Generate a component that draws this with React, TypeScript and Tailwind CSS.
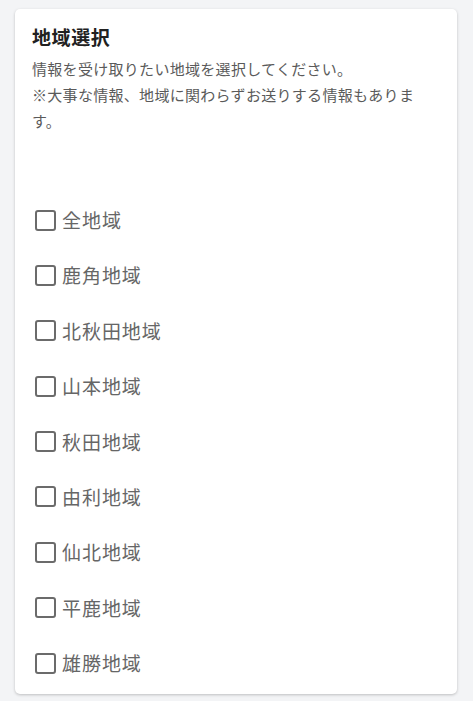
import React from "react";

const regions = [
  "全地域",
  "鹿角地域",
  "北秋田地域",
  "山本地域",
  "秋田地域",
  "由利地域",
  "仙北地域",
  "平鹿地域",
  "雄勝地域",
];

export default function App() {
  return (
    <div
      className="min-h-screen bg-[#f3f4f6] pl-[15px] pr-[16px] pt-[9px] pb-[7px]"
      style={{ fontFamily: '"Noto Sans CJK JP", "Noto Sans", sans-serif' }}
    >
      <div className="rounded-[5px] bg-white px-[17px] pt-[14px] pb-[17px] shadow-[0_1px_3px_rgba(0,0,0,0.22)]">
        <h1 className="text-[19px] font-bold leading-[28px] tracking-[0.03em] text-[#212121]">
          地域選択
        </h1>
        <p className="mt-[5px] text-[15px] leading-[26px] tracking-[0.02em] text-[#5a5a5a]">
          情報を受け取りたい地域を選択してください。
          <br />
          ※大事な情報、地域に関わらずお送りする情報もあります。
        </p>
        <div className="mt-[72px] flex flex-col gap-[27.375px]">
          {regions.map((r) => (
            <label key={r} className="flex h-[28px] items-center">
              <span className="ml-[3px] h-[21px] w-[21px] rounded-[3px] border-[2.5px] border-[#6b6b6b]" />
              <span className="ml-[6px] text-[19px] leading-[28px] tracking-[0.05em] text-[#666]">
                {r}
              </span>
            </label>
          ))}
        </div>
      </div>
    </div>
  );
}
